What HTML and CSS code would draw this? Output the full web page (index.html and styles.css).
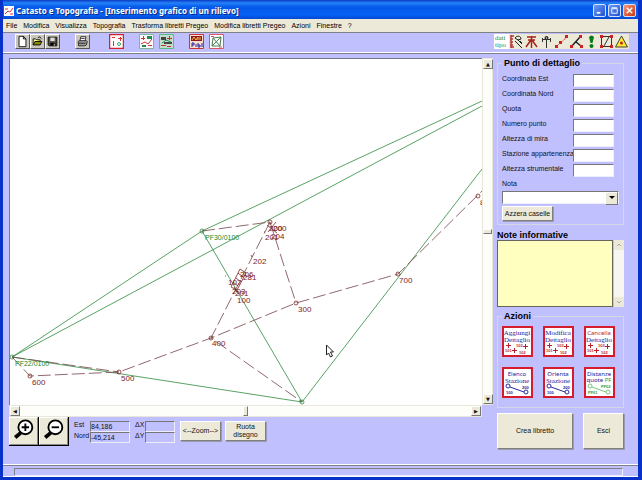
FILE: index.html
```html
<!DOCTYPE html>
<html lang="it">
<head>
<meta charset="utf-8">
<title>Catasto e Topografia</title>
<link rel="stylesheet" href="styles.css">
</head>
<body>
<div class="window">
  <header class="titlebar">
    <svg class="app-icon" viewBox="0 0 10 10"><rect width="10" height="10" fill="#fff"/><path d="M1 8 4 5 6 6 9 2M1 3h3M6 8h3" stroke="#d33" fill="none"/></svg>
    <h1>Catasto e Topografia - [Inserimento grafico di un rilievo]</h1>
    <button class="caption" aria-label="Riduci"><svg viewBox="0 0 12 12"><path d="M3 8.500h4" stroke="#fff" stroke-width="2"/></svg></button>
    <button class="caption" aria-label="Ingrandisci"><svg viewBox="0 0 12 12"><path d="M3 4h6v5H3zM3 3h6" stroke="#fff" fill="none"/></svg></button>
    <button class="caption close" aria-label="Chiudi"><svg viewBox="0 0 12 12"><path d="m3 3 6 6M9 3 3 9" stroke="#fff" stroke-width="1.500"/></svg></button>
  </header>
  <nav class="menubar">
    <a href="#">File</a><a href="#">Modifica</a><a href="#">Visualizza</a><a href="#">Topografia</a><a href="#">Trasforma libretti Pregeo</a><a href="#">Modifica libretti Pregeo</a><a href="#">Azioni</a><a href="#">Finestre</a><a href="#">?</a>
  </nav>
  <div class="toolbar">
    <div class="group">
      <button class="tool raised" aria-label="Nuovo"><svg viewBox="0 0 15 15"><path d="M3.500 1.500h5l3 3v9h-8z" fill="#fff" stroke="#000"/><path d="M8.500 1.500v3h3" fill="none" stroke="#000"/></svg></button>
      <button class="tool raised" aria-label="Apri"><svg viewBox="0 0 15 15"><path d="M2.500 11.500v-7h3l1 1h4v2" fill="#ff8" stroke="#000"/><path d="m2.500 11.500 2-4h8l-2 4z" fill="#880" stroke="#000"/><path d="M8 3q2-2 4 1" fill="none" stroke="#000"/></svg></button>
      <button class="tool raised" aria-label="Salva"><svg viewBox="0 0 15 15"><path d="M2.500 2.500h10v10h-9l-1-1z" fill="#554" stroke="#000"/><path d="M5 3h5v4H5z" fill="#ddd"/><path d="M5 9h6v3H5z"/><path d="M9 10h1v2H9z" fill="#fff"/></svg></button>
    </div>
    <div class="group">
      <button class="tool raised" aria-label="Stampa"><svg viewBox="0 0 15 15"><path d="m4.500 7 1-5h6l-1 5" fill="#fff" stroke="#222"/><path d="M2.500 7.500 4 6.500h8l1 1-1 4-2 1H3z" fill="#999" stroke="#222"/><path d="M3 9.500h8M6 4h4" stroke="#222"/></svg></button>
    </div>
    <div class="group wide">
      <button class="tool" aria-label="Punti"><svg viewBox="0 0 15 15"><path d="M.5.5h14v14H.5z" fill="#fff" stroke="#d9202c" stroke-width="1.500"/><path d="M9 4.500h4M11.500 3v4M4.500 7v5M3 3.500h3" stroke="#d33"/><circle cx="10" cy="10" r="1.500" fill="none" stroke="#3a5"/></svg></button>
    </div>
    <div class="group pair">
      <button class="tool" aria-label="Trasforma punti"><svg viewBox="0 0 15 15"><path d="M.5.5h14v14H.5z" fill="#fff" stroke="#7db894"/><path d="M2 4.500h4M4.500 2v4M2 10l4-2 3 2 4-5M9 11.500h4" fill="none" stroke="#c33"/><path d="M8 2h5v3H8zM3 11h4v2H3z" fill="#285"/></svg></button>
      <button class="tool" aria-label="Trasforma libretto"><svg viewBox="0 0 15 15"><path d="M.5.5h14v14H.5z" fill="#c5dccb" stroke="#5b8"/><path d="M2 3h5v3H2zM5 8h8v2H5z" fill="#444"/><path d="M8 4.500h5M10.500 2v4M2 11.500h5M8 12.500h4" stroke="#b33" fill="none"/><path d="m3 9 4-3 5 2" fill="none" stroke="#285"/></svg></button>
    </div>
    <div class="group pair">
      <button class="tool" aria-label="Pregeo"><svg viewBox="0 0 15 15"><path d="M.5.5h14v14H.5z" fill="#fcdccb" stroke="#c33"/><path d="M2 2h11v5H2z" fill="#8a1b24"/><path d="m3 6 2-3 2 3 2-3v3M11 3v3" fill="none" stroke="#fb4"/><path d="M3 13V9h2v2H3M7 10v3M9 11h2v2H9v-4M13 9v4" fill="none" stroke="#22a"/></svg></button>
      <button class="tool" aria-label="Rete"><svg viewBox="0 0 15 15"><path d="M.5.5h14v14H.5z" fill="#fff" stroke="#d56"/><path d="m3 12 1-8 8-1-1 9zM4 4l7 8M3 12l9-9" fill="none" stroke="#497d53"/><path d="M2 2.500h3M10 13h3" stroke="#c55"/></svg></button>
    </div>
    <div class="group end">
      <button class="tool" aria-label="Dati tipo"><svg viewBox="0 0 15 15"><rect width="15" height="15" fill="#fff"/><text class="tiny-green" x="1" y="6">dati</text><text class="tiny-green" x="1" y="13">tipo</text></svg></button>
      <button class="tool" aria-label="Misure"><svg viewBox="0 0 15 15"><path d="M2 1v13M2 2h3M2 5h2M2 8h2M2 11h2M2 13h3" stroke="#b33" stroke-width="1.500"/><path d="M6 4c2-3 6-2 6 1L9 6 6 4M6 7l7 7M8 5l5 5M11 7l2 2" fill="none" stroke="#222"/></svg></button>
      <button class="tool" aria-label="Stazione"><svg viewBox="0 0 15 15"><path d="M3 3h9M4 6h7M7.500 2v12M7 6l-5 7M8 6l5 7" fill="none" stroke="#a3261c" stroke-width="1.500"/></svg></button>
      <button class="tool" aria-label="Mira"><svg viewBox="0 0 15 15"><path d="M7.500 2v12M3 5.500h9M3.500 4v4M11.500 4v4" stroke="#333"/><circle cx="7.500" cy="4" r="2" fill="#333"/><path d="M7 4h1" stroke="#fff"/></svg></button>
      <button class="tool" aria-label="Allineamento"><svg viewBox="0 0 15 15"><path d="m2 13 4-4 4-3 3-4" fill="none" stroke="#c55" stroke-dasharray="4 1"/><path d="M1 11h3v3H1zM5 7h3v3H5zM11 1h3v3h-3z" fill="#c22"/></svg></button>
      <button class="tool" aria-label="Intersezione"><svg viewBox="0 0 15 15"><path d="m2 13 9-10M7 8l5 4" stroke="#222" stroke-width="1.500"/><path d="M1 11h3v3H1zM10 1h3v3h-3zM11 11h3v3h-3z" fill="#c22"/></svg></button>
      <button class="tool" aria-label="Avviso"><svg viewBox="0 0 15 15"><path d="M5 3q2.500-3 5 0L8.500 9h-2z" fill="#087a18"/><circle cx="7.500" cy="12" r="2" fill="#087a18"/></svg></button>
      <button class="tool" aria-label="Area"><svg viewBox="0 0 15 15"><path d="M2.500 2.500h10v10h-10zM5 12l5-9" fill="none" stroke="#333"/><path d="M1 1h3v3H1zM11 1h3v3h-3zM1 11h3v3H1zM11 11h3v3h-3z" fill="#c22"/></svg></button>
      <button class="tool" aria-label="Vertice"><svg viewBox="0 0 15 15"><path d="m7.500 2 6 11h-12z" fill="#ffe82e" stroke="#443"/><circle cx="7.500" cy="9" r="1.500" fill="#b22"/></svg></button>
    </div>
  </div>

  <main class="workspace">
    <section class="drawing-side">
      <div class="viewer">
        <svg class="plan" viewBox="10 59 472 346" preserveAspectRatio="xMinYMin slice">
          <g class="boundary">
            <path d="M482 101 202 231 12 357 482 106M202 231l100 171L12 357M302 402 482 169"/>
            <circle cx="202" cy="231" r="2"/><circle cx="12" cy="357" r="2"/><circle cx="302" cy="402" r="2"/>
          </g>
          <g class="traverse">
            <path d="M202 231 270 222 296 303"/><path d="M270 222 211 338 302 402"/><path d="M12 357 119 372"/><path d="m12 357 18 19 89-4 92-34 85-35 102-29 84-83"/>
          </g>
          <g class="station">
            <circle cx="270" cy="222" r="2"/><circle cx="296" cy="303" r="2"/><circle cx="211" cy="338" r="2"/><circle cx="119" cy="372" r="2"/><circle cx="30" cy="376" r="2"/><circle cx="398" cy="274" r="2"/><circle cx="478" cy="196" r="2"/>
            <path d="m240 269 6 4-9 17-6-3zM238 273l5 4M236 278l5 4M233 282l5 4M234 287l3 5M267 225l10 8M268 232l8-10M251 255l1 2M225 276h1M264 232h1"/>
          </g>
          <g class="labels">
            <text class="fiducial" x="205" y="240">PF30/0100</text><text class="fiducial" x="15" y="366">PF22/0100</text>
            <text x="269" y="231">200</text><text x="273" y="231">200</text><text x="265" y="240">201</text><text x="271" y="239">204</text><text x="253" y="264">202</text>
            <text x="240" y="277">206</text><text x="243" y="280">281</text><text x="228" y="285">107</text><text x="232" y="294">203</text><text x="235" y="296">201</text><text x="237" y="303">100</text>
            <text x="298" y="312">300</text><text x="212" y="346">400</text><text x="121" y="381">500</text><text x="32" y="385">600</text><text x="399" y="283">700</text><text x="480" y="205">800</text>
          </g>
          <path class="pointer" d="M326.500 345v10l2-2 2 4 2-1-2-4h3z"/>
        </svg>
        <div class="scroll vertical"><button aria-label="Su">▲</button><i></i><button aria-label="Giù">▼</button></div>
        <div class="scroll horizontal"><button aria-label="Sinistra">◀</button><i></i><button aria-label="Destra">▶</button></div>
      </div>
      <div class="controls">
        <div class="zoomers">
          <button aria-label="Ingrandisci disegno"><svg viewBox="0 0 28 28"><path d="M11 16 5 21" stroke="#000" stroke-width="4"/><circle cx="16" cy="10" r="7.500" fill="#fff" stroke="#000" stroke-width="2"/><path d="M12 10h8M16 6v8" stroke="#000" stroke-width="2"/></svg></button>
          <button aria-label="Riduci disegno"><svg viewBox="0 0 28 28"><path d="M11 16 5 21" stroke="#000" stroke-width="4"/><circle cx="16" cy="10" r="7.500" fill="#fff" stroke="#000" stroke-width="2"/><path d="M12 10h8" stroke="#000" stroke-width="2"/></svg></button>
        </div>
        <div class="readouts position">
          <label for="est">Est</label><input id="est" value="84,186" readonly>
          <label for="nord">Nord</label><input id="nord" value="-45,214" readonly>
        </div>
        <div class="readouts delta">
          <label for="dx">ΔX</label><input id="dx" readonly>
          <label for="dy">ΔY</label><input id="dy" readonly>
        </div>
        <button class="push">&lt;--Zoom--&gt;</button>
        <button class="push">Ruota<br>disegno</button>
      </div>
    </section>

    <aside class="panel">
      <fieldset class="detail">
        <legend>Punto di dettaglio</legend>
        <div class="row"><label for="f1">Coordinata Est</label><input id="f1"></div>
        <div class="row"><label for="f2">Coordinata Nord</label><input id="f2"></div>
        <div class="row"><label for="f3">Quota</label><input id="f3"></div>
        <div class="row"><label for="f4">Numero punto</label><input id="f4"></div>
        <div class="row"><label for="f5">Altezza di mira</label><input id="f5"></div>
        <div class="row"><label for="f6">Stazione appartenenza</label><input id="f6"></div>
        <div class="row"><label for="f7">Altezza strumentale</label><input id="f7"></div>
        <div class="row"><label for="nota">Nota</label></div>
        <div class="combo"><select id="nota"><option></option></select></div>
        <button class="push reset">Azzera caselle</button>
      </fieldset>
      <div class="notes">
        <label for="note">Note informative</label>
        <div class="notes-box">
          <textarea id="note"></textarea>
          <div class="notes-scroll"><svg viewBox="0 0 10 10"><path d="m3 6 2-2 2 2"/></svg><svg viewBox="0 0 10 10"><path d="m3 4 2 2 2-2"/></svg></div>
        </div>
      </div>
      <fieldset class="actions">
        <legend>Azioni</legend>
        <div class="action-grid">
          <button><svg viewBox="0 0 27 27"><text class="serif" x="13" y="7">Aggiungi</text><text class="serif" x="13" y="14">Dettaglio</text><path class="cross" d="M2 17.500h5M4.500 15v5M19 18.500h5M21.500 16v5M8 22.500h5M10.500 20v5"/><text class="code red" x="12" y="19">103</text><text class="code red" x="1" y="24">101</text><text class="code red" x="15" y="26">102</text></svg></button>
          <button><svg viewBox="0 0 27 27"><text class="serif" x="13" y="7">Modifica</text><text class="serif" x="13" y="14">Dettaglio</text><path class="cross" d="M2 17.500h5M4.500 15v5M19 18.500h5M21.500 16v5M8 22.500h5M10.500 20v5"/><text class="code red" x="12" y="19">103</text><text class="code red" x="1" y="24">101</text><text class="code red" x="15" y="26">102</text></svg></button>
          <button><svg viewBox="0 0 27 27"><text class="sans red" x="13" y="7">Cancella</text><text class="serif" x="13" y="14">Dettaglio</text><path class="cross" d="M2 17.500h5M4.500 15v5M19 18.500h5M21.500 16v5M8 22.500h5M10.500 20v5"/><text class="code red" x="12" y="19">103</text><text class="code red" x="1" y="24">101</text><text class="code red" x="15" y="26">102</text></svg></button>
          <button><svg viewBox="0 0 27 27"><text class="sans" x="13" y="7">Elenco</text><text class="serif" x="13" y="14">Stazione</text><path class="link" d="m6 18 14 5"/><circle class="link" cx="4" cy="17" r="2"/><circle class="link" cx="22" cy="23" r="2"/><text class="code" x="2" y="25">100</text><text class="code" x="18" y="20">200</text></svg></button>
          <button><svg viewBox="0 0 27 27"><text class="sans" x="13" y="7">Orienta</text><text class="serif" x="13" y="14">Stazione</text><path class="link" d="m6 18 14 5"/><circle class="link" cx="4" cy="17" r="2"/><circle class="link" cx="22" cy="23" r="2"/><text class="code" x="2" y="25">100</text><text class="code" x="18" y="20">200</text></svg></button>
          <button><svg viewBox="0 0 27 27"><text class="sans" x="13" y="7">Distanze</text><text class="sans" x="13" y="13">quote <tspan class="green">PF</tspan></text><path class="link pale" d="m6 18 14 5"/><circle class="link pale" cx="4" cy="17" r="2"/><circle class="link pale" cx="22" cy="23" r="2"/><text class="code green" x="2" y="25">PF01</text><text class="code green" x="15" y="19">PF02</text></svg></button>
        </div>
      </fieldset>
      <div class="finish"><button class="push">Crea libretto</button><button class="push">Esci</button></div>
    </aside>
  </main>
  <footer class="statusbar"><div></div></footer>
</div>
</body>
</html>
```
FILE: styles.css
```css
* { box-sizing: border-box; }
body { margin: 0; font: 7px/8px "Liberation Sans", Arial, sans-serif; color: #111; }
button, input, select, textarea { font: inherit; color: inherit; margin: 0; padding: 0; border-radius: 0; }
svg { display: block; }
button { border: 0; background: none; }
.window { min-height: 100vh; display: flex; flex-direction: column; background: #c0c0ff; border: solid #0831c9; border-width: 0 4px 3px 3px; }

.titlebar { height: 19px; display: flex; align-items: center; gap: 2px; padding: 2px 2px 0 1px; background: linear-gradient(#0a3cc4, #2382fa 3px, #0558e8 7px, #0560f4 15px, #0348cf); color: #fff; }
.app-icon { width: 10px; height: 10px; }
h1 { flex: 1; margin: 0; font: bold 8px/10px "Noto Sans", "Open Sans", sans-serif; white-space: nowrap; text-shadow: 1px 1px #0a2a80; }
.caption { width: 13px; height: 13px; border: 1px solid #d5e2ff; border-radius: 2px; background: linear-gradient(135deg, #6f9cf5, #1d4fd2); }
.close { background: linear-gradient(135deg, #f09a7d, #c9350e); }
.caption svg { width: 11px; height: 11px; }

.menubar { height: 13px; display: flex; align-items: center; gap: 6px; padding-left: 3px; background: #ece9d8; white-space: nowrap; }
.menubar a { color: #000; text-decoration: none; }

.toolbar { height: 20px; display: flex; align-items: center; padding: 0 9px 2px 12px; border-top: 1px solid #808088; }
.group { display: flex; margin-right: 15px; }
.wide { margin-left: 4px; }
.pair { gap: 5px; }
.end { margin-left: auto; margin-right: 0; }
.tool { width: 15px; height: 15px; }
.tool svg { width: 15px; height: 15px; }
.end .tool { background: #ece9d8; }
.raised { background: #c8c6bd; border: 1px solid; border-color: #fff #555 #555 #fff; }
.raised svg { width: 13px; height: 13px; }
.tiny-green { font: 7px "Liberation Serif", serif; fill: #2a8a3a; }

.workspace { flex: 1; display: flex; gap: 4px; border-top: 1px solid #fff; box-shadow: inset 0 1px #808088; padding: 5px 14px 0 6px; }
.drawing-side { flex: 1; min-width: 0; display: flex; flex-direction: column; }
.viewer { flex: 1; display: grid; grid-template: minmax(0, 1fr) 12px / minmax(0, 1fr) 11px; }
.plan { width: 100%; height: 100%; min-height: 0; background: #fff; border: solid #77778c; border-width: 1px 0 0 1px; }
.boundary { fill: none; stroke: #2f8a3c; stroke-width: 0.8; }
.traverse { fill: none; stroke: #75424a; stroke-width: 0.8; stroke-dasharray: 13 4; }
.station { fill: none; stroke: #7a2424; stroke-width: 0.8; }
.labels { font: 8px "Liberation Sans", Arial, sans-serif; fill: #7b1c1c; }
.labels .fiducial { font-size: 7px; fill: #188a2a; }
.pointer { fill: #fff; stroke: #222; }
.scroll { display: flex; background: #fdfdfa; border: 1px solid #e9e7dc; }
.scroll button { width: 10px; height: 10px; font: 5px/8px "DejaVu Sans", sans-serif; flex: none; }
.scroll button, .scroll i { background: #ece9d8; border: 1px solid; border-color: #fff #777 #777 #fff; }
.vertical { flex-direction: column; }
.vertical i { height: 5px; margin: auto 0; }
.horizontal i { width: 5px; margin: auto; height: 10px; }

.controls { height: 48px; display: flex; align-items: flex-start; }
.zoomers { display: flex; background: #000; gap: 1px; padding: 0 1px 1px 0; margin-right: 5px; }
.zoomers button { width: 29px; height: 28px; background: #ece9d8; border: 1px solid; border-color: #fff #888 #888 #fff; }
.zoomers svg { width: 27px; height: 26px; }
.readouts { display: grid; padding-top: 4px; margin-right: 5px; }
.position { grid-template-columns: 16px 40px; }
.delta { grid-template-columns: 10px 30px; }
.readouts input { width: 100%; height: 11px; min-width: 0; background: #c0c0ff; border: 1px solid; border-color: #777 #eef #eef #777; }
.push { background: #ece9d8; border: 1px solid; border-color: #fff #807f78 #807f78 #fff; box-shadow: 1px 1px #9b9bb8; }
.controls .push { width: 41px; height: 20px; margin: 4px 4px 0 0; }

.panel { width: 127px; flex: none; }
fieldset { margin: 0; min-width: 0; border: 1px solid #d6d6e6; }
legend { padding: 0 2px; font-weight: bold; }
.detail { height: 167px; padding: 6px 4px 0; }
legend, .notes label { font-size: 9px; line-height: 10px; color: #000; }
.row { display: grid; grid-template-columns: 71px 41px; height: 15px; }
.row label { line-height: 9px; white-space: nowrap; }
.row input { height: 13px; min-width: 0; }
.row input { background: #fff; border: 1px solid; border-color: #777 #eef #eef #777; }
.combo { position: relative; margin-top: -3px; }
.combo select { display: block; appearance: none; width: 100%; height: 13px; background: #fff; border: 1px solid; border-color: #777 #eef #eef #777; }
.combo::before { content: ""; position: absolute; right: 1px; top: 1px; width: 11px; height: 11px; background: #ece9d8; border: 1px solid; border-color: #fff #777 #777 #fff; pointer-events: none; }
.combo::after { content: ""; position: absolute; right: 4px; top: 5px; border: solid transparent; border-width: 3px 3px 0; border-top-color: #000; pointer-events: none; }
.reset { width: 51px; height: 15px; margin-top: 2px; display: block; }
.notes { margin-top: 5px; }
.notes label { display: block; font-weight: bold; }
.notes-box { display: flex; gap: 1px; height: 67px; }
.notes textarea { flex: 1; min-width: 0; resize: none; background: #ffffc0; border: 1px solid #66665c; }
.notes-scroll { width: 10px; display: flex; flex-direction: column; justify-content: space-between; background: #f7f6f0; }
.notes-scroll svg { width: 10px; height: 10px; background: #ece9d8; stroke: #aaa; fill: none; }
.actions { height: 97px; margin-top: 4px; padding: 5px 4px 0; }
.action-grid { display: grid; grid-template-columns: repeat(3, 31px); gap: 10px; }
.action-grid button { width: 31px; height: 31px; background: #fff; border: 2px solid #d41c2c; }
.action-grid svg { width: 27px; height: 27px; }
.action-grid text { fill: #22229a; text-anchor: middle; }
.serif { font: 7px "Liberation Serif", serif; }
.sans { font: 6px "Noto Sans", sans-serif; }
.action-grid .code { font: bold 4px "Liberation Sans", sans-serif; text-anchor: start; }
.action-grid .red { fill: #b8202a; }
.action-grid .green { fill: #2f9a35; }
.cross { stroke: #b8202a; }
.link { stroke: #2a2aa0; fill: none; }
.pale { stroke: #7cc47c; }
.finish { display: grid; grid-template-columns: 76px 41px; gap: 10px; margin-top: 5px; }
.finish .push { height: 36px; }

.statusbar { height: 12px; padding: 2px 15px 1px 11px; border-top: 1px solid #808088; border-bottom: 1px solid #fff; box-shadow: 0 -1px #fff; }
.statusbar div { height: 8px; border: 1px solid; border-color: #808088 #eef #eef #808088; }
```
